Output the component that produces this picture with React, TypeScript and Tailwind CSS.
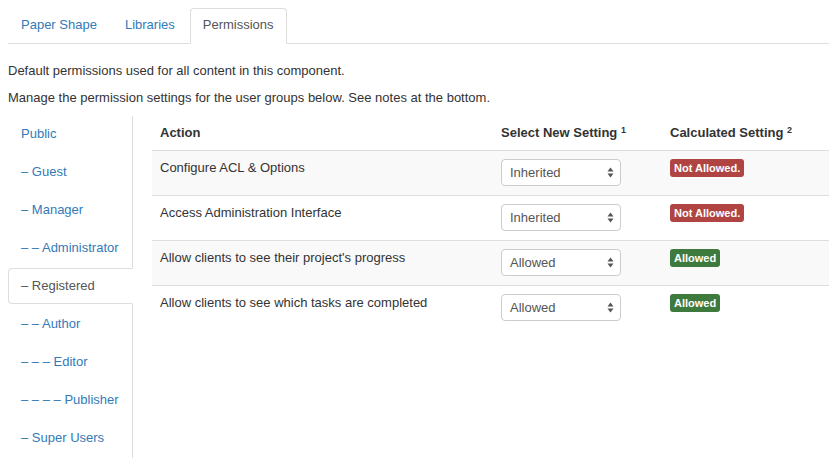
import React from 'react';

// Gruplar: seviye = önündeki tire sayısı
const groups: { name: string; level: number }[] = [
  { name: 'Public', level: 0 },
  { name: 'Guest', level: 1 },
  { name: 'Manager', level: 1 },
  { name: 'Administrator', level: 2 },
  { name: 'Registered', level: 1 },
  { name: 'Author', level: 2 },
  { name: 'Editor', level: 3 },
  { name: 'Publisher', level: 4 },
  { name: 'Super Users', level: 1 },
];

const actions: { label: string; setting: string; allowed: boolean }[] = [
  { label: 'Configure ACL & Options', setting: 'Inherited', allowed: false },
  { label: 'Access Administration Interface', setting: 'Inherited', allowed: false },
  { label: "Allow clients to see their project's progress", setting: 'Allowed', allowed: true },
  { label: 'Allow clients to see which tasks are completed', setting: 'Allowed', allowed: true },
];

function SelectArrows() {
  return (
    <svg width="7" height="11" viewBox="0 0 7 11" className="text-[#555]">
      <path d="M3.5 0.5 L6.5 4.5 L0.5 4.5 Z" fill="currentColor" />
      <path d="M3.5 10.5 L6.5 6.5 L0.5 6.5 Z" fill="currentColor" />
    </svg>
  );
}

export default function App() {
  const tabs = ['Paper Shape', 'Libraries', 'Permissions'];
  const activeTab = 'Permissions';
  const activeGroup = 'Registered';

  return (
    <div className="w-[840px] h-[468px] overflow-hidden bg-white pt-2 pl-2 pr-[11px] font-['Liberation_Sans',Arial,sans-serif] text-[13px] leading-[18px] text-[#333]">
      {/* --- Üst sekmeler --- */}
      <div className="flex border-b border-[#ddd]">
        {tabs.map((t) => (
          <div
            key={t}
            className={
              t === activeTab
                ? '-mb-px mr-[2px] px-3 pt-[7px] pb-[9px] border border-[#ddd] border-b-white bg-white rounded-t-[4px] text-[#555]'
                : '-mb-px mr-[2px] px-3 pt-[7px] pb-[9px] border border-transparent rounded-t-[4px] text-[#337ab7]'
            }
          >
            {t}
          </div>
        ))}
      </div>

      <p className="mt-[18px] mb-[9px]">Default permissions used for all content in this component.</p>
      <p className="mb-[9px]">Manage the permission settings for the user groups below. See notes at the bottom.</p>

      <div className="flex">
        {/* --- Sol grup listesi --- */}
        <div className="w-[125px] shrink-0 border-r border-[#ddd]">
          {groups.map((g) => {
            const prefix = g.level > 0 ? Array(g.level).fill('–').join(' ') + ' ' : '';
            const active = g.name === activeGroup;
            return (
              <div
                key={g.name}
                className={
                  active
                    ? 'relative -mr-px mb-[2px] px-3 py-2 border border-[#ddd] border-r-transparent rounded-l-[4px] bg-white text-[#555] whitespace-nowrap'
                    : 'relative -mr-px mb-[2px] px-3 py-2 border border-transparent rounded-l-[4px] text-[#337ab7] whitespace-nowrap'
                }
              >
                {prefix}
                {g.name}
              </div>
            );
          })}
        </div>

        {/* --- İzin tablosu --- */}
        <div className="ml-[19px] flex-1">
          <div className="grid grid-cols-[341px_169px_1fr] font-bold">
            <div className="px-2 py-2">Action</div>
            <div className="px-2 py-2">
              Select New Setting <sup className="text-[9px]">1</sup>
            </div>
            <div className="px-2 py-2">
              Calculated Setting <sup className="text-[9px]">2</sup>
            </div>
          </div>
          {actions.map((a, i) => (
            <div
              key={a.label}
              className={
                i % 2 === 0
                  ? 'grid grid-cols-[341px_169px_1fr] h-[45px] border-t border-[#ddd] bg-[#f9f9f9]'
                  : 'grid grid-cols-[341px_169px_1fr] h-[45px] border-t border-[#ddd]'
              }
            >
              <div className="px-2 pt-2">{a.label}</div>
              <div className="px-2 pt-2">
                <div className="w-[120px] h-[27px] flex items-center justify-between pl-2 pr-[6px] border border-[#ccc] rounded-[4px] bg-white text-[#555]">
                  <span>{a.setting}</span>
                  <SelectArrows />
                </div>
              </div>
              <div className="px-2 pt-2">
                <span
                  className={
                    a.allowed
                      ? 'inline-block px-1 py-[2px] rounded-[3px] bg-[#3e7a3d] text-white text-[11px] leading-[14px] font-bold'
                      : 'inline-block px-1 py-[2px] rounded-[3px] bg-[#b04442] text-white text-[11px] leading-[14px] font-bold'
                  }
                >
                  {a.allowed ? 'Allowed' : 'Not Allowed.'}
                </span>
              </div>
            </div>
          ))}
        </div>
      </div>
    </div>
  );
}
